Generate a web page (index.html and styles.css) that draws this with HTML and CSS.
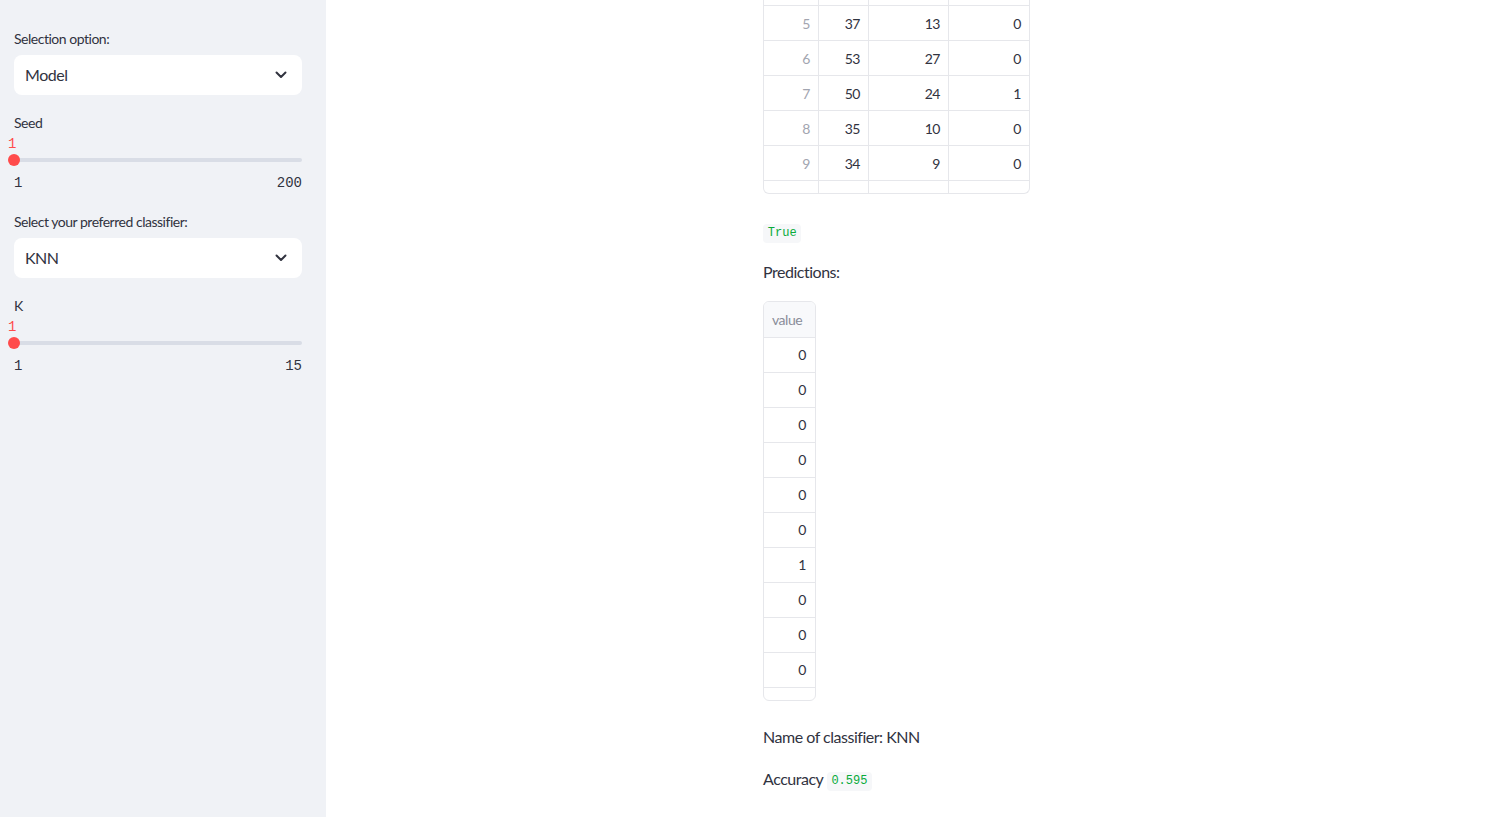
FILE: index.html
```html
<!DOCTYPE html>
<html>
<head>
<meta charset="utf-8">
<link rel="stylesheet" href="styles.css">
</head>
<body>
<div class="app">
  <aside class="sidebar">
    <div class="label">Selection option:</div>
    <div class="select">
      <span>Model</span>
      <svg class="chev" width="12" height="8" viewBox="0 0 12 8"><path d="M1.5 1.5 L6 6 L10.5 1.5" fill="none" stroke="#31333f" stroke-width="2" stroke-linecap="round" stroke-linejoin="round"/></svg>
    </div>
    <div class="label gap">Seed</div>
    <div class="slider">
      <div class="sval">1</div>
      <div class="track-area">
        <div class="track"></div>
        <div class="thumb"></div>
      </div>
      <div class="ticks"><span>1</span><span>200</span></div>
    </div>
    <div class="label gap2">Select your preferred classifier:</div>
    <div class="select">
      <span>KNN</span>
      <svg class="chev" width="12" height="8" viewBox="0 0 12 8"><path d="M1.5 1.5 L6 6 L10.5 1.5" fill="none" stroke="#31333f" stroke-width="2" stroke-linecap="round" stroke-linejoin="round"/></svg>
    </div>
    <div class="label gap">K</div>
    <div class="slider">
      <div class="sval">1</div>
      <div class="track-area">
        <div class="track"></div>
        <div class="thumb"></div>
      </div>
      <div class="ticks"><span>1</span><span>15</span></div>
    </div>
  </aside>
  <main class="main">
    <div class="df df1">
      <div class="row partial-top">
        <div class="c"></div><div class="c"></div><div class="c"></div><div class="c"></div>
      </div>
      <div class="row"><div class="c idx">5</div><div class="c">37</div><div class="c">13</div><div class="c">0</div></div>
      <div class="row"><div class="c idx">6</div><div class="c">53</div><div class="c">27</div><div class="c">0</div></div>
      <div class="row"><div class="c idx">7</div><div class="c">50</div><div class="c">24</div><div class="c">1</div></div>
      <div class="row"><div class="c idx">8</div><div class="c">35</div><div class="c">10</div><div class="c">0</div></div>
      <div class="row"><div class="c idx">9</div><div class="c">34</div><div class="c">9</div><div class="c">0</div></div>
      <div class="row partial-bottom">
        <div class="c"></div><div class="c"></div><div class="c"></div><div class="c"></div>
      </div>
    </div>
    <div class="codeline"><code>True</code></div>
    <p class="txt pred">Predictions:</p>
    <div class="df df2">
      <div class="hrow">value</div>
      <div class="vrow">0</div>
      <div class="vrow">0</div>
      <div class="vrow">0</div>
      <div class="vrow">0</div>
      <div class="vrow">0</div>
      <div class="vrow">0</div>
      <div class="vrow">1</div>
      <div class="vrow">0</div>
      <div class="vrow">0</div>
      <div class="vrow">0</div>
      <div class="vend"></div>
    </div>
    <p class="txt name">Name of classifier: KNN</p>
    <p class="txt acc">Accuracy <code>0.595</code></p>
  </main>
</div>
</body>
</html>
```

FILE: styles.css
```css
* { box-sizing: border-box; }
html, body {
  margin: 0;
  padding: 0;
  height: 100%;
  overflow: hidden;
  background: #ffffff;
  color: #31333f;
  font-family: "Source Sans Pro", Lato, "Noto Sans", sans-serif;
  letter-spacing: -0.03em;
}
.app {
  display: flex;
  height: 817px;
}
.sidebar {
  width: 326px;
  flex: 0 0 326px;
  background: #f0f2f6;
  padding: 29px 24px 0 14px;
}
.label {
  font-size: 14px;
  line-height: 20px;
  height: 20px;
}
.label.gap { margin-top: 18px; }
.label.gap2 { margin-top: 19px; }
.select {
  margin-top: 6px;
  height: 40px;
  background: #ffffff;
  border-radius: 8px;
  display: flex;
  align-items: center;
  justify-content: space-between;
  padding: 0 15px 0 11px;
  font-size: 16px;
  line-height: 20px;
}
.select span { margin-top: -1px; }
.chev { display: block; }
.sval {
  margin-top: 1px;
  font-family: "Liberation Mono", "DejaVu Sans Mono", monospace;
  letter-spacing: 0;
  font-size: 14px;
  line-height: 20px;
  height: 20px;
  color: #ff4b4b;
  margin-left: -6px;
}
.track-area {
  position: relative;
  height: 12px;
  display: flex;
  align-items: center;
}
.track {
  width: 100%;
  height: 4px;
  border-radius: 2px;
  background: #d9dde6;
}
.thumb {
  position: absolute;
  left: -6px;
  top: 0;
  width: 12px;
  height: 12px;
  border-radius: 50%;
  background: #ff4b4b;
}
.ticks {
  margin-top: 7px;
  display: flex;
  justify-content: space-between;
  font-family: "Liberation Mono", "DejaVu Sans Mono", monospace;
  letter-spacing: 0;
  font-size: 14px;
  line-height: 20px;
  height: 20px;
}
.main {
  flex: 1;
  padding-left: 437px;
}
.df {
  border: 1px solid #e6e7eb;
  font-size: 14px;
  overflow: hidden;
  background: #fff;
}
.df1 {
  width: 267px;
  border-top: none;
  border-radius: 0 0 6px 6px;
}
.row {
  display: grid;
  grid-template-columns: 55px 50px 80px 80px;
  border-top: 1px solid #e6e7eb;
  height: 35px;
}
.row.partial-top { border-top: none; height: 5px; }
.row.partial-bottom { height: 13px; }
.c {
  border-right: 1px solid #e6e7eb;
  text-align: right;
  padding-right: 8px;
  line-height: 35px;
}
.c:last-child { border-right: none; }
.c.idx { color: #a2a5b0; }
.codeline {
  margin-top: 28px;
  height: 19px;
  line-height: 19px;
}
code {
  display: inline-block;
  font-family: "Liberation Mono", "DejaVu Sans Mono", monospace;
  letter-spacing: 0;
  font-size: 12px;
  height: 19px;
  line-height: 19px;
  padding: 0 4.8px;
  background: #f6f7f9;
  color: #09ab3b;
  border-radius: 4px;
  vertical-align: middle;
}
.txt {
  margin: 0;
  font-size: 16px;
  line-height: 24px;
}
.pred { margin-top: 19px; }
.df2 {
  margin-top: 17px;
  width: 53px;
  border-radius: 6px;
}
.hrow {
  height: 36px;
  line-height: 36px;
  background: #f8f9fb;
  color: #8a8d99;
  padding-left: 8px;
  border-bottom: 1px solid #e6e7eb;
}
.vrow {
  height: 35px;
  line-height: 34px;
  text-align: right;
  padding-right: 9px;
  border-bottom: 1px solid #e6e7eb;
}
.vend { height: 12px; }
.name { margin-top: 24px; }
.acc { margin-top: 18px; }
.acc code { vertical-align: 1px; }
```
